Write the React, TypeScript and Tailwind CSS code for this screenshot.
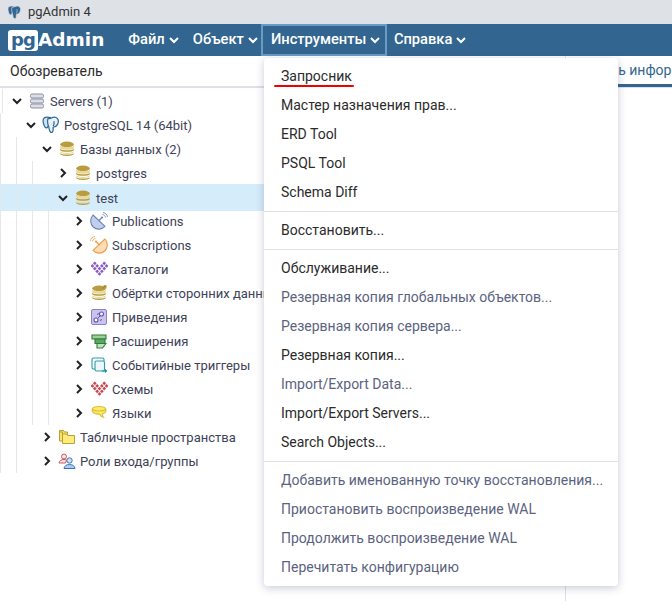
import type { ReactNode } from "react";

const Chevron = ({ open, className = "" }: { open: boolean; className?: string }) => (
  <svg width="12" height="12" viewBox="0 0 12 12" fill="none" stroke="currentColor" strokeWidth="2" className={`shrink-0 ${className}`}>
    <path d={open ? "M2 4l4 4 4-4" : "M4 2l4 4-4 4"} />
  </svg>
);

const ServersIcon = () => (
  <svg width="16" height="16" viewBox="0 0 16 16" fill="#dcdee6" stroke="#8d90a3" strokeWidth="1">
    <rect x="1.5" y="1" width="13" height="4" rx="1.5" />
    <rect x="1.5" y="6" width="13" height="4" rx="1.5" />
    <rect x="1.5" y="11" width="13" height="4" rx="1.5" />
  </svg>
);

const Elephant = ({ size = 16, dark = false }: { size?: number; dark?: boolean }) => (
  <svg width={size} height={size} viewBox="0 0 16 16" stroke={dark ? "#dee1e6" : "#336791"} strokeWidth={dark ? 0.7 : 1.1} strokeLinejoin="round">
    <path d="M8 1.5C6 .9 3.4.6 1.9 1.8.6 3 1 6 1.8 8.200c.5 1.300 1.300 2.500 2.300 2.300 1-.2 1.300-1.200 1.600-2.200" fill={dark ? "#336791" : "#cfe3f2"} />
    <path d="M5.200 2.500C4.700 5 5 7.500 6 9.500c.3 2 .3 4 1.700 5 1.500.4 2.200-.8 2.200-2.500V10c1.500-.2 3-.8 3.800-2.300.9-1.800 1.100-4 .1-5.300C12.500.8 10 .8 8.300 1.800 7 2.500 5.700 2.200 5.200 2.500z" fill={dark ? "#336791" : "#e8f2fa"} />
    <path d="M10.600 4.500c.4 1.500.1 3.200-.7 4.500" fill="none" />
  </svg>
);

const Stack = ({ arrow = false }: { arrow?: boolean }) => (
  <svg width="16" height="16" viewBox="0 0 16 16">
    <ellipse cx="8" cy="3.400" rx="6.800" ry="2.800" fill="#b99c3f" />
    <path d="M1.200 4.600c1 2 12.600 2 13.600 0v2.600c-1 2.200-12.600 2.200-13.600 0z" fill="#e6d99a" />
    <path d="M1.200 7.800c1 2 12.600 2 13.600 0v1.400c-1 2.200-12.600 2.200-13.600 0z" fill="#b99c3f" />
    <path d="M1.200 10.300c1 2 12.600 2 13.600 0v1c-1 2.200-12.600 2.200-13.600 0z" fill="#e6d99a" />
    <path d="M1.200 12c1 2 12.600 2 13.600 0v1c-1 2.600-12.600 2.600-13.600 0z" fill="#b99c3f" />
    {arrow && <path d="M11.500 3.500l3-2.500M12.500 .8h2.400v2.400" stroke="#a5892f" strokeWidth="1.200" fill="none" />}
  </svg>
);

const Dish = ({ fill, stroke, flip = false }: { fill: string; stroke: string; flip?: boolean }) => (
  <svg width="18" height="18" viewBox="0 0 18 18" fill="none" className={flip ? "-scale-x-100" : ""}>
    <path d="M3 3c-3.200 3.600-3 9 .3 12 3.300 3 8.500 2.800 11.700-.6z" fill={fill} stroke={stroke} strokeWidth="1.100" strokeLinejoin="round" />
    <path d="M8.500 9l3-3" stroke={stroke} strokeWidth="1.200" />
    <circle cx="12" cy="5.500" r="1.100" fill={stroke} />
    <path d="M12.500 2.500c1.500.2 2.800 1.500 3 3M13 .5c2.300.3 4.200 2.200 4.500 4.500" stroke={stroke} strokeWidth=".9" />
  </svg>
);

// heart made of little squares on a diamond lattice: [column from centre, row]
const heartCells = [
  [-2, 0], [2, 0],
  [-3, 1], [-1, 1], [1, 1], [3, 1],
  [-2, 2], [0, 2], [2, 2],
  [-1, 3], [1, 3],
  [0, 4],
];

const Diamonds = ({ color }: { color: string }) => (
  <svg width="17" height="16" viewBox="-1 0 18 16" fill={color}>
    {heartCells.map(([k, j], i) => {
      const x = 8 + k * 2.500;
      const y = 2 + j * 2.800;
      return <rect key={i} x={x - 1.400} y={y - 1.400} width="2.800" height="2.800" transform={`rotate(45 ${x} ${y})`} />;
    })}
  </svg>
);

const CastIcon = () => (
  <svg width="16" height="16" viewBox="0 0 16 16" fill="none">
    <rect x=".5" y=".5" width="15" height="15" rx="1.500" fill="#c9c3ee" stroke="#8a7fd0" />
    <circle cx="10.500" cy="5" r="2" stroke="#5f55ad" strokeWidth="1.100" fill="#fff" />
    <circle cx="5" cy="11" r="2" stroke="#5f55ad" strokeWidth="1.100" fill="#fff" />
    <path d="M7 9l2-2M6 5.500l2-1M9 11.500l2-1" stroke="#5f55ad" />
  </svg>
);

const ExtensionIcon = () => (
  <svg width="16" height="16" viewBox="0 0 16 16" fill="#9dcf9b" stroke="#2f7d3a" strokeWidth="1.100">
    <path d="M1 2h14v4H1z" />
    <path d="M4 6h10v4.500H4z" fill="#5aa865" />
    <path d="M6 10.500h9l-3.500 4.500H6z" fill="#c2e0bd" />
  </svg>
);

const TriggerIcon = () => (
  <svg width="16" height="16" viewBox="0 0 16 16" fill="none" stroke="#2c9aad" strokeWidth="1.100">
    <path d="M4 12H2.500a1.500 1.500 0 0 1-1.500-1.500v-8A1.500 1.500 0 0 1 2.500 1h9A1.500 1.500 0 0 1 13 2.500V4" />
    <rect x="4" y="4" width="9.500" height="10" rx="1.500" fill="#eef8fa" />
    <path d="M11 14h4M14 12.500l1.500 1.500-1.500 1.500" stroke="#1d8799" />
  </svg>
);

const LanguageIcon = () => (
  <svg width="16" height="16" viewBox="0 0 16 16" fill="#ffe96b" stroke="#d5c137" strokeWidth="1.100">
    <path d="M8 1.500c4 0 7 1 7 3.500 0 2.200-1.500 3.300-3.500 3.800-.2 1.600.4 2.900 1 3.500-1.800-.3-3.200-1.500-4-3.200-3.800 0-7.500-1-7.500-4.100C1 2.500 4 1.500 8 1.500z" />
    <path d="M1.500 4.500c2 2 11 2 13 0" fill="none" />
  </svg>
);

const FolderIcon = () => (
  <svg width="16" height="16" viewBox="0 0 16 16" fill="#f5e16b" stroke="#b9a135" strokeWidth="1">
    <path d="M.5 1.500h4l1 1.500h3v3H.5z" />
    <path d="M.5 3h3v9h-3z" />
    <path d="M3.500 5h4l1 1.500h7v8h-12z" fill="#ffec7a" />
  </svg>
);

const RolesIcon = () => (
  <svg width="18" height="16" viewBox="0 0 18 16" fill="none">
    <circle cx="6" cy="3.500" r="2.500" fill="#fbe3e3" stroke="#c9575b" />
    <path d="M1 10c.3-2.500 2.500-3.500 5-3.500 1 0 2 .2 2.700.6L7.500 10z" fill="#fbe3e3" stroke="#c9575b" />
    <circle cx="11.500" cy="7.500" r="2.700" fill="#cfe2f7" stroke="#3a76b8" />
    <path d="M6 15.500c.3-2.800 2.600-4 5.500-4s5.300 1.200 5.500 4z" fill="#a9cbef" stroke="#3a76b8" />
  </svg>
);

type Node = {
  label: string;
  depth: number;
  open?: boolean;
  selected?: boolean;
  icon: ReactNode;
};

const nodes: Node[] = [
  { label: "Servers (1)", depth: 0, open: true, icon: <ServersIcon /> },
  { label: "PostgreSQL 14 (64bit)", depth: 1, open: true, icon: <Elephant size={18} /> },
  { label: "Базы данных (2)", depth: 2, open: true, icon: <Stack /> },
  { label: "postgres", depth: 3, icon: <Stack /> },
  { label: "test", depth: 3, open: true, selected: true, icon: <Stack /> },
  { label: "Publications", depth: 4, icon: <Dish fill="#c3cfe9" stroke="#6b83bd" /> },
  { label: "Subscriptions", depth: 4, icon: <Dish fill="#fbdcb5" stroke="#ee9d47" flip /> },
  { label: "Каталоги", depth: 4, icon: <Diamonds color="#8c5cc4" /> },
  { label: "Обёртки сторонних данных", depth: 4, icon: <Stack arrow /> },
  { label: "Приведения", depth: 4, icon: <CastIcon /> },
  { label: "Расширения", depth: 4, icon: <ExtensionIcon /> },
  { label: "Событийные триггеры", depth: 4, icon: <TriggerIcon /> },
  { label: "Схемы", depth: 4, icon: <Diamonds color="#c9474e" /> },
  { label: "Языки", depth: 4, icon: <LanguageIcon /> },
  { label: "Табличные пространства", depth: 2, icon: <FolderIcon /> },
  { label: "Роли входа/группы", depth: 2, icon: <RolesIcon /> },
];

const TreeRow = ({ node }: { node: Node }) => (
  <div className={`flex items-stretch whitespace-nowrap ${node.selected ? "-mt-px -mb-0.5 h-[27px] bg-[#d5ecfa]" : "h-6"}`}>
    {node.depth === 0 && <span className="ml-0.5 w-[9px] shrink-0 border-l border-[#e4e7ee]" />}
    {Array.from({ length: node.depth }).map((_, i) => (
      <span key={i} className="w-4 shrink-0 border-l border-[#e4e7ee]" />
    ))}
    <span className={`flex shrink-0 items-center justify-center ${node.depth === 0 ? "w-3" : "ml-[9px] w-3"}`}>
      <Chevron open={!!node.open} className="text-[#222]" />
    </span>
    <span className="ml-[5px] flex w-[18px] shrink-0 items-center justify-center">{node.icon}</span>
    <span className="ml-1 flex items-center pt-[3px] text-[13px] text-[#404258]">{node.label}</span>
  </div>
);

type MenuEntry = { label: string; off?: boolean } | "divider";

const toolsMenu: MenuEntry[] = [
  { label: "Запросник" },
  { label: "Мастер назначения прав..." },
  { label: "ERD Tool" },
  { label: "PSQL Tool" },
  { label: "Schema Diff" },
  "divider",
  { label: "Восстановить..." },
  "divider",
  { label: "Обслуживание..." },
  { label: "Резервная копия глобальных объектов...", off: true },
  { label: "Резервная копия сервера...", off: true },
  { label: "Резервная копия..." },
  { label: "Import/Export Data...", off: true },
  { label: "Import/Export Servers..." },
  { label: "Search Objects..." },
  "divider",
  { label: "Добавить именованную точку восстановления...", off: true },
  { label: "Приостановить воспроизведение WAL", off: true },
  { label: "Продолжить воспроизведение WAL", off: true },
  { label: "Перечитать конфигурацию", off: true },
];

const NavItem = ({ label, active = false }: { label: string; active?: boolean }) => (
  <div
    className={`flex h-8 items-center gap-[3px] pb-px text-[14.7px] font-medium text-white ${
      active ? "-ml-1 w-[126px] border-2 border-[#6a9bc3] pl-2" : "pr-1.5 pl-[7px]"
    }`}
  >
    {label}
    <Chevron open className="text-white" />
  </div>
);

export default function App() {
  return (
    <div className="relative h-[601px] w-[672px] overflow-hidden bg-white font-['Roboto',sans-serif] text-sm text-[#2b2b2b]">
      <div className="flex h-6 items-center gap-[6px] bg-[#dee1e6] pl-[7px] text-[13px] text-[#333]">
        <Elephant size={15} dark />
        pgAdmin 4
      </div>

      <nav className="flex h-8 items-center bg-[#326690]">
        <div className="ml-2 flex items-center">
          <span className="flex h-[21px] w-[30px] items-center justify-center rounded-[3px] bg-white font-['DejaVu_Sans',sans-serif] text-[18px] leading-none font-bold tracking-[-1px] text-[#326690]">
            pg
          </span>
          <span className="font-['DejaVu_Sans',sans-serif] text-[18.500px] leading-none font-bold text-white">Admin</span>
        </div>
        <div className="ml-[17px] flex items-center">
          <NavItem label="Файл" />
          <NavItem label="Объект" />
          <NavItem label="Инструменты" active />
          <NavItem label="Справка" />
        </div>
      </nav>

      <div className="flex h-[545px]">
        <div className="w-[566px] shrink-0 overflow-hidden border-r border-[#dde0e6]">
          <div className="flex h-8 items-center border-b-2 border-[#dde0e6] pb-px pl-2.5">Обозреватель</div>
          <div className="pt-px">
            {nodes.map((node) => (
              <TreeRow key={node.label} node={node} />
            ))}
          </div>
        </div>
        <div className="min-w-0 flex-1 overflow-hidden">
          <div className="h-8 border-b border-[#dde0e6]">
            <div className="flex h-[31px] items-center border-b-[3px] border-[#326690] pl-[11px] whitespace-nowrap text-[#326690]">
              Панель информации
            </div>
          </div>
        </div>
      </div>

      <div className="absolute top-[58px] left-[264px] w-[354px] rounded-[4px] bg-white py-1 shadow-[0_2px_8px_rgba(60,70,110,0.28)]">
        {toolsMenu.map((entry, i) =>
          entry === "divider" ? (
            <div key={i} className="my-1 h-px bg-[#dde0e6]" />
          ) : (
            <div key={i} className={`flex h-[29px] items-center pb-px pl-[17px] ${entry.off ? "text-[#5b6380]" : "text-[#2b2b2b]"}`}>
              {entry.label}
            </div>
          ),
        )}
      </div>

      <div className="absolute top-[85px] left-[274px] h-[2px] w-[80px] rounded-full bg-[#f00000]" />
    </div>
  );
}
